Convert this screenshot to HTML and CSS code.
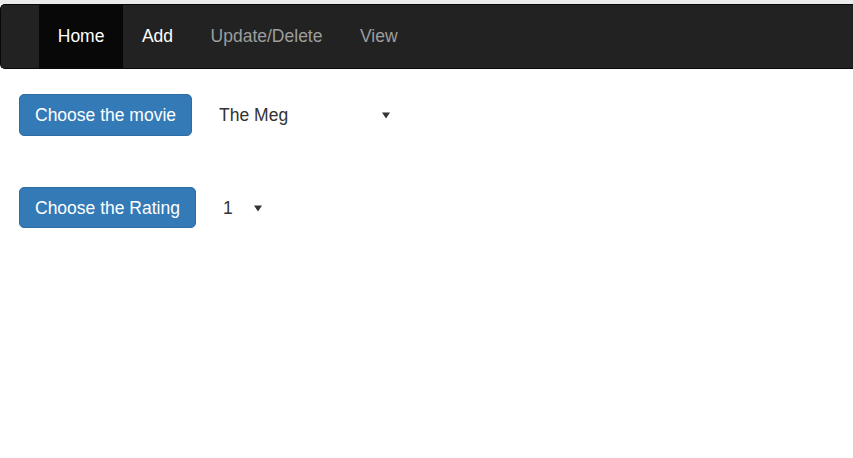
FILE: index.html
```html
<!DOCTYPE html>
<html>
<head>
<meta charset="utf-8">
<link rel="stylesheet" href="styles.css">
</head>
<body>
<div class="topstrip"></div>
<nav class="navbar">
  <ul class="nav">
    <li class="active"><a href="#">Home</a></li>
    <li><a href="#" class="bright">Add</a></li>
    <li><a href="#">Update/Delete</a></li>
    <li><a href="#">View</a></li>
  </ul>
</nav>
<main class="content">
  <div class="row">
    <button class="btn">Choose the movie</button>
    <div class="sel sel-movie">
      <select><option>The Meg</option></select>
      <svg class="arrow" width="8" height="7" viewBox="0 0 8 7"><path d="M0 0.5H8L4 6.5Z" fill="#333"/></svg>
    </div>
  </div>
  <div class="row row2">
    <button class="btn">Choose the Rating</button>
    <div class="sel sel-rating">
      <select><option>1</option></select>
      <svg class="arrow" width="8" height="7" viewBox="0 0 8 7"><path d="M0 0.5H8L4 6.5Z" fill="#333"/></svg>
    </div>
  </div>
</main>
</body>
</html>
```

FILE: styles.css
```css
html, body {
  margin: 0;
  padding: 0;
  background: #fff;
  font-family: "Liberation Sans", Arial, sans-serif;
  font-size: 17.5px;
  color: #333;
}
.topstrip {
  height: 4px;
  background: #ebebeb;
}
.navbar {
  height: 63px;
  background: #222;
  border: 1px solid #080808;
  border-right: none;
  border-radius: 5px 0 0 5px;
  padding-left: 38px;
  box-sizing: content-box;
}
.nav {
  list-style: none;
  margin: 0;
  padding: 0;
  display: flex;
  height: 100%;
}
.nav li a {
  display: block;
  height: 100%;
  box-sizing: border-box;
  padding: 19px 18.75px;
  line-height: 25px;
  color: #9d9d9d;
  text-decoration: none;
}
.nav li a.bright {
  color: #fff;
}
.nav li.active a {
  background: #080808;
  color: #fff;
}
.content {
  padding: 25px 19px 0;
}
.row {
  display: flex;
  align-items: center;
}
.row2 {
  margin-top: 51px;
}
.btn {
  font-family: inherit;
  font-size: 17.5px;
  line-height: 25px;
  color: #fff;
  background: #337ab7;
  border: 1px solid #2e6da4;
  border-radius: 5px;
  padding: 7.5px 15px;
  height: 42px;
  box-sizing: border-box;
  cursor: pointer;
}
.row2 .btn {
  height: 41px;
}
.sel {
  display: flex;
  align-items: center;
}
.sel select {
  appearance: none;
  -webkit-appearance: none;
  border: none;
  background: transparent;
  font-family: inherit;
  font-size: 17.5px;
  color: #333;
  padding: 0;
  outline: none;
}
.sel-movie {
  margin-left: 27px;
}
.sel-movie select {
  width: 163px;
}
.sel-rating {
  margin-left: 27px;
}
.sel-rating select {
  width: 31px;
}
.arrow {
  display: block;
  margin-top: 1px;
}
```
